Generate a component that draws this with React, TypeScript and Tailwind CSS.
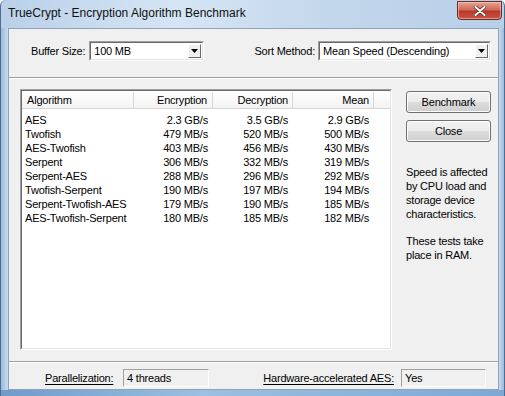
import React from "react";

const rows = [
  ["AES", "2.3 GB/s", "3.5 GB/s", "2.9 GB/s"],
  ["Twofish", "479 MB/s", "520 MB/s", "500 MB/s"],
  ["AES-Twofish", "403 MB/s", "456 MB/s", "430 MB/s"],
  ["Serpent", "306 MB/s", "332 MB/s", "319 MB/s"],
  ["Serpent-AES", "288 MB/s", "296 MB/s", "292 MB/s"],
  ["Twofish-Serpent", "190 MB/s", "197 MB/s", "194 MB/s"],
  ["Serpent-Twofish-AES", "179 MB/s", "190 MB/s", "185 MB/s"],
  ["AES-Twofish-Serpent", "180 MB/s", "185 MB/s", "182 MB/s"],
];

function Combo({ value, width }: { value: string; width: string }) {
  return (
    <div className={`${width} h-[20px] border border-t-[#a0a0a0] border-l-[#a0a0a0] border-b-white border-r-white`}>
      <div className="flex h-full items-center border border-t-[#696969] border-l-[#696969] border-b-[#e3e3e3] border-r-[#e3e3e3] bg-white">
        <span className="flex-1 pl-[3px] leading-none">{value}</span>
        <div className="mr-[1px] flex h-[14px] w-[13px] items-center justify-center border border-t-white border-l-white border-b-[#696969] border-r-[#696969] bg-[#f0f0f0]">
          <svg width="7" height="4" viewBox="0 0 7 4">
            <path d="M0 0h7L3.5 4z" fill="#000" />
          </svg>
        </div>
      </div>
    </div>
  );
}

function Button({ label }: { label: string }) {
  return (
    <div className="flex h-[22px] w-[85px] items-center justify-center rounded-[3px] border border-[#707070] bg-[linear-gradient(#f2f2f2_0%,#ebebeb_50%,#dddddd_50%,#cfcfcf_100%)] shadow-[inset_0_0_0_1px_#fcfcfc]">
      {label}
    </div>
  );
}

function Field({ value, width }: { value: string; width: string }) {
  return (
    <div className={`${width} flex h-[18px] items-center border border-t-[#a0a0a0] border-l-[#a0a0a0] border-b-white border-r-white bg-[#f0f0f0] pl-[3px]`}>
      {value}
    </div>
  );
}

export default function App() {
  return (
    <div className="flex h-[396px] w-[505px] flex-col overflow-hidden rounded-t-[6px] border-l border-r border-[#4e6d8e] bg-[linear-gradient(90deg,#b9d0e8,#d6e5f4_35%,#c3d7ec_65%,#b8cfe8)] font-['Liberation_Sans',Arial,sans-serif] text-[11px] tracking-[-0.2px] text-black">
      {/* Title bar */}
      <div className="flex h-[28px] shrink-0 items-start justify-between">
        <span className="pl-[7px] pt-[7px] text-[12px] leading-none tracking-normal text-[#111]">
          TrueCrypt - Encryption Algorithm Benchmark
        </span>
        <div className="mr-[2px] mt-[1px] flex h-[19px] w-[45px] items-center justify-center rounded-b-[4px] border border-[#6b2b2b] bg-[linear-gradient(#e8a493,#d06a59_45%,#b8392a_55%,#c9563f)] shadow-[inset_0_0_0_1px_rgba(255,220,210,0.5)]">
          <svg width="12" height="10" viewBox="0 0 12 10">
            <path d="M1.5 1 L10.5 9 M10.5 1 L1.5 9" stroke="#5a2a24" strokeWidth="3.4" strokeLinecap="round" />
            <path d="M1.5 1 L10.5 9 M10.5 1 L1.5 9" stroke="#ffffff" strokeWidth="2" strokeLinecap="round" />
          </svg>
        </div>
      </div>

      <div className="flex min-h-0 flex-1">
        <div className="w-[7px] bg-[linear-gradient(90deg,#9dbbdb,#c6dbef)]" />

        {/* Client area */}
        <div className="flex flex-1 flex-col border border-[#8fa3b8] bg-[#f0f0f0]">
          {/* Top settings */}
          <div className="flex h-[48px] items-start pl-[22px] pr-[7px] pt-[12px]">
            <div className="flex h-[20px] items-center">
              <span>Buffer Size:</span>
              <div className="ml-[4px]">
                <Combo value="100 MB" width="w-[115px]" />
              </div>
            </div>
            <div className="ml-auto flex h-[20px] items-center">
              <span>Sort Method:</span>
              <div className="ml-[3px]">
                <Combo value="Mean Speed (Descending)" width="w-[173px]" />
              </div>
            </div>
          </div>

          <div className="h-[2px] border-t border-b border-t-[#a0a0a0] border-b-white" />

          {/* Middle: list + buttons */}
          <div className="flex h-[282px] pl-[11px] pr-[7px] pt-[10px]">
            <div className="h-[261px] w-[372px] border border-t-[#a0a0a0] border-l-[#a0a0a0] border-b-white border-r-white">
              <div className="h-full border border-t-[#696969] border-l-[#696969] border-b-[#e3e3e3] border-r-[#e3e3e3] bg-white">
                <div className="flex h-[18px] items-center border-b border-[#d5d5d5] bg-[linear-gradient(#ffffff,#f3f3f3)] pt-[1px]">
                  <div className="flex h-full w-[112px] items-center border-r border-[#d5d5d5] pl-[5px]">Algorithm</div>
                  <div className="flex h-full w-[79px] items-center justify-end border-r border-[#d5d5d5] pr-[5px]">Encryption</div>
                  <div className="flex h-full w-[80px] items-center justify-end border-r border-[#d5d5d5] pr-[4px]">Decryption</div>
                  <div className="flex h-full w-[81px] items-center justify-end border-r border-[#d5d5d5] pr-[4px]">Mean</div>
                  <div className="flex-1" />
                </div>
                <div className="pt-[4px]">
                  {rows.map((r) => (
                    <div key={r[0]} className="flex h-[14px] items-center leading-none">
                      <div className="w-[112px] pl-[3px]">{r[0]}</div>
                      <div className="w-[79px] pr-[5px] text-right">{r[1]}</div>
                      <div className="w-[80px] pr-[5px] text-right">{r[2]}</div>
                      <div className="w-[81px] pr-[5px] text-right">{r[3]}</div>
                    </div>
                  ))}
                </div>
              </div>
            </div>

            <div className="ml-auto flex w-[85px] flex-col pt-[2px]">
              <Button label="Benchmark" />
              <div className="mt-[7px]">
                <Button label="Close" />
              </div>
              <p className="mt-[23px] leading-[14px]">
                Speed is affected
                <br />
                by CPU load and
                <br />
                storage device
                <br />
                characteristics.
              </p>
              <p className="mt-[13px] leading-[14px]">
                These tests take
                <br />
                place in RAM.
              </p>
            </div>
          </div>

          <div className="h-[2px] border-t border-b border-t-[#a0a0a0] border-b-white" />

          {/* Bottom info */}
          <div className="flex flex-1 items-start pl-[36px] pt-[6px]">
            <div className="flex h-[18px] w-[78px] items-center">
              <span className="underline decoration-1 underline-offset-2">Parallelization:</span>
            </div>
            <Field value="4 threads" width="w-[86px]" />
            <div className="flex h-[18px] w-[192px] items-center justify-end pr-[7px]">
              <span className="underline decoration-1 underline-offset-2">Hardware-accelerated AES:</span>
            </div>
            <Field value="Yes" width="w-[85px]" />
          </div>
        </div>

        <div className="w-[5px] bg-[linear-gradient(90deg,#c6dbef,#9dbbdb)]" />
      </div>

      <div className="h-[6px] shrink-0 bg-[linear-gradient(90deg,#6f9bc9,#9dbfe0_40%,#7ea8d3)]" />
    </div>
  );
}
